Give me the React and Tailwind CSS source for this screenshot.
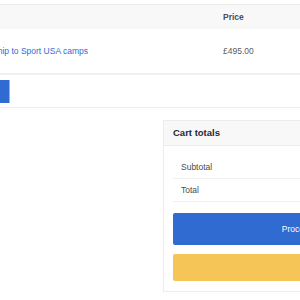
export default function App() {
  return (
    <div className="w-[300px] h-[300px] overflow-hidden bg-white font-['Liberation_Sans',Arial,sans-serif] text-[8.5px] text-[#555]">
      {/* cart table */}
      <div className="mt-[4px] border-t border-[#ececec]">
        <div className="h-[24px] flex items-center bg-[#f8f8f8]">
          <div className="w-[223px] shrink-0" />
          <span className="font-bold text-[#4b4f58]">Price</span>
        </div>
        <div className="h-[44px] flex items-center">
          <div className="w-[223px] shrink-0 flex justify-end pr-[135px] whitespace-nowrap">
            <a className="text-[#2f6bd4]">Scholarship to Sport USA camps</a>
          </div>
          <span className="text-[#5d5d5d]">£495.00</span>
        </div>
        <div className="h-[2px] bg-[#f1f1f1]" />
        <div className="h-[33px] flex items-center border-b border-[#ececec]">
          <div className="w-[10px] h-[23px] bg-[#2f6bd0] border-r border-[#8fb2f0]" />
        </div>
      </div>

      {/* cart totals */}
      <div className="mt-[12px] ml-[163px] w-[320px] border border-[#ececec]">
        <div className="h-[25px] flex items-center px-[9px] bg-[#f8f8f8] border-b border-[#ececec]">
          <span className="text-[9.5px] font-bold text-[#1f2937]">Cart totals</span>
        </div>
        <div className="px-[9px] pt-[10px] pb-[10px]">
          <div className="h-[23px] flex items-center pl-[8px] border-b border-[#f0f0f0] text-[#4b4b4b]">Subtotal</div>
          <div className="h-[23px] flex items-center pl-[8px] border-b border-[#f0f0f0] text-[#4b4b4b]">Total</div>
          <button className="mt-[11px] w-[295px] h-[32px] rounded-[2px] bg-[#2f6bd0] text-white flex items-center justify-center whitespace-nowrap">
            Proceed to checkout
          </button>
          <div className="mt-[9px] w-[295px] h-[27px] rounded-[2px] bg-[#f5c557]" />
        </div>
      </div>
    </div>
  );
}
